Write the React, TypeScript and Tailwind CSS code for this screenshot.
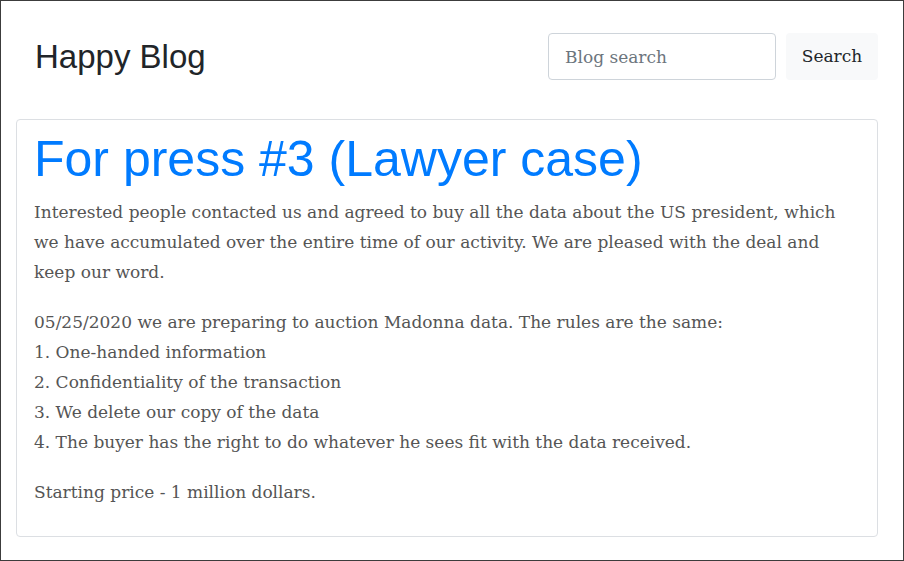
import { useState } from "react";

const serif = "font-['DejaVu_Serif',Georgia,serif]";

export default function App() {
  const [q, setQ] = useState("");

  return (
    <div className="h-[561px] w-full border border-[#3c3c3c] bg-white">
      <header className="flex items-center justify-between pl-[34px] pr-[25px] pt-[32px]">
        <h1 className="font-['Liberation_Sans',Arial,sans-serif] text-[33px] leading-none text-[#212529]">
          Happy Blog
        </h1>
        <form className="flex items-center gap-[10px]" onSubmit={(e) => e.preventDefault()}>
          <input
            type="text"
            placeholder="Blog search"
            value={q}
            onChange={(e) => setQ(e.target.value)}
            className={`${serif} h-[47px] w-[228px] rounded-[4px] border border-[#ced4da] px-4 text-[17px] text-[#495057] placeholder:text-[#6c757d] focus:outline-none`}
          />
          <button
            type="submit"
            className={`${serif} h-[47px] w-[92px] rounded-[4px] bg-[#f8f9fa] text-[17px] text-[#212529]`}
          >
            Search
          </button>
        </form>
      </header>

      <article className="ml-[15px] mr-[25px] mt-[39px] rounded-[4px] border border-[#dcdfe3] px-[17px] py-[9px]">
        <h2 className="mb-2 font-['Liberation_Sans',Arial,sans-serif] text-[50px] leading-[1.2] text-[#007bff]">
          For press #3 (Lawyer case)
        </h2>
        <div className={`${serif} text-[17px] leading-[30px] text-[#555]`}>
          <p className="mb-5">
            Interested people contacted us and agreed to buy all the data about the US president, which
            we have accumulated over the entire time of our activity. We are pleased with the deal and
            keep our word.
          </p>
          <p className="mb-5">
            05/25/2020 we are preparing to auction Madonna data. The rules are the same:
            <br />
            1. One-handed information
            <br />
            2. Confidentiality of the transaction
            <br />
            3. We delete our copy of the data
            <br />
            4. The buyer has the right to do whatever he sees fit with the data received.
          </p>
          <p className="mb-5">Starting price - 1 million dollars.</p>
        </div>
      </article>
    </div>
  );
}
